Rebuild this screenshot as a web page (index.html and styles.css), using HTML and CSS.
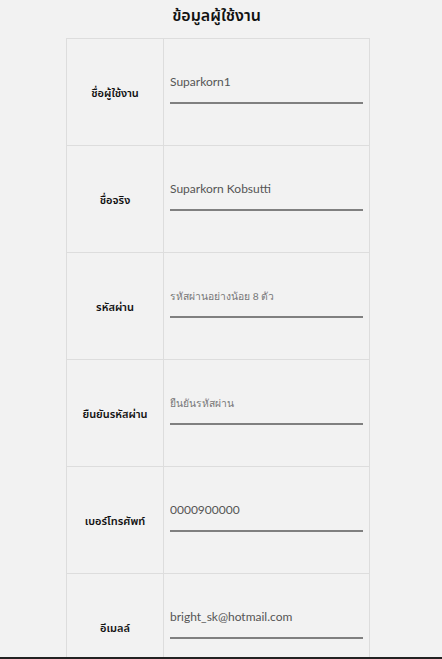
FILE: index.html
```html
<!DOCTYPE html>
<html lang="th">
<head>
<meta charset="utf-8">
<title>ข้อมูลผู้ใช้งาน</title>
<link rel="stylesheet" href="styles.css">
</head>
<body>
<div class="page">
  <h2 class="title">ข้อมูลผู้ใช้งาน</h2>
  <table class="info">
    <tr>
      <th class="label">ชื่อผู้ใช้งาน</th>
      <td class="field"><input class="inp" type="text" value="Suparkorn1"></td>
    </tr>
    <tr>
      <th class="label">ชื่อจริง</th>
      <td class="field"><input class="inp" type="text" value="Suparkorn Kobsutti"></td>
    </tr>
    <tr>
      <th class="label">รหัสผ่าน</th>
      <td class="field"><input class="inp" type="password" placeholder="รหัสผ่านอย่างน้อย 8 ตัว"></td>
    </tr>
    <tr>
      <th class="label">ยืนยันรหัสผ่าน</th>
      <td class="field"><input class="inp" type="password" placeholder="ยืนยันรหัสผ่าน"></td>
    </tr>
    <tr>
      <th class="label">เบอร์โทรศัพท์</th>
      <td class="field"><input class="inp" type="text" value="0000900000"></td>
    </tr>
    <tr>
      <th class="label">อีเมลล์</th>
      <td class="field"><input class="inp" type="text" value="bright_sk@hotmail.com"></td>
    </tr>
  </table>
</div>
<div class="bottom-bar"></div>
</body>
</html>
```
FILE: styles.css
```css
html, body {
  margin: 0;
  padding: 0;
  background: #f2f2f2;
}
body {
  font-family: "Noto Sans", "Noto Sans Thai", Tahoma, sans-serif;
}
.page {
  width: 304px;
  margin-left: 66px;
}
.title {
  margin: 0;
  height: 38px;
  padding-top: 3px;
  box-sizing: border-box;
  text-align: center;
  font-size: 16px;
  font-weight: 600;
  color: #111;
  line-height: 24px;
  margin-left: -3px;
}
.info {
  width: 304px;
  border-collapse: collapse;
  table-layout: fixed;
}
.info tr {
  height: 107px;
}
.label {
  width: 96px;
  border: 1px solid #dddddd;
  font-size: 11px;
  font-weight: 600;
  color: #111;
  text-align: center;
  vertical-align: middle;
  padding: 0;
  padding-top: 2px;
}
.field {
  border: 1px solid #dddddd;
  vertical-align: top;
  padding: 26px 6px 0 6px;
}
.inp {
  display: block;
  width: 100%;
  box-sizing: border-box;
  height: 39px;
  border: none;
  border-bottom: 2px solid #808080;
  background: transparent;
  padding: 0 0 4px 0;
  font-family: "Lato", "Noto Sans", sans-serif;
  font-size: 12px;
  color: #555;
  outline: none;
}
.inp::placeholder {
  color: #777;
  font-size: 10.3px;
}
.bottom-bar {
  position: fixed;
  left: 0;
  right: 0;
  bottom: 0;
  height: 2px;
  background: #222;
}
```
